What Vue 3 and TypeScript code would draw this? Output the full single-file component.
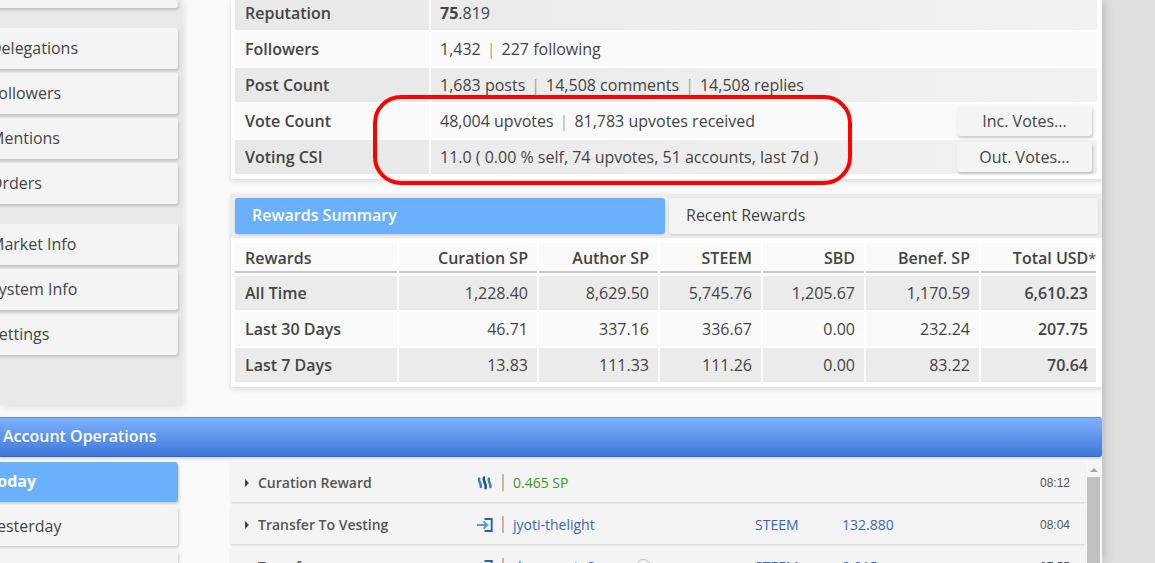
<script setup lang="ts">
const navA: string[] = ['Delegations', 'Followers', 'Mentions', 'Orders']
const navB: string[] = ['Market Info', 'System Info', 'Settings']
const days: string[] = ['Today', 'Yesterday', 'Last 7 Days']
const headers: string[] = ['Curation SP', 'Author SP', 'STEEM', 'SBD', 'Benef. SP']
const rewards = [
  { label: 'All Time', vals: ['1,228.40', '8,629.50', '5,745.76', '1,205.67', '1,170.59'], total: '6,610.23' },
  { label: 'Last 30 Days', vals: ['46.71', '337.16', '336.67', '0.00', '232.24'], total: '207.75' },
  { label: 'Last 7 Days', vals: ['13.83', '111.33', '111.26', '0.00', '83.22'], total: '70.64' },
]
</script>

<template>
  <div class="page">
    <div class="main">
      <div class="top">
        <aside class="side">
          <div class="nav stub"></div>
          <div class="group">
            <div v-for="n in navA" :key="n" class="nav">{{ n }}</div>
          </div>
          <div class="group">
            <div v-for="n in navB" :key="n" class="nav">{{ n }}</div>
          </div>
        </aside>
        <div class="content">
          <section class="card stats">
            <table class="t1">
              <tbody>
                <tr class="odd"><th>Reputation</th><td><b class="semi">75</b>.819</td></tr>
                <tr><th>Followers</th><td>1,432<i class="sep">|</i>227 following</td></tr>
                <tr class="odd"><th>Post Count</th><td>1,683 posts<i class="sep">|</i>14,508 comments<i class="sep">|</i>14,508 replies</td></tr>
                <tr><th>Vote Count</th><td><div class="withbtn"><span>48,004 upvotes<i class="sep green">|</i>81,783 upvotes received</span><button class="btn">Inc. Votes...</button></div></td></tr>
                <tr class="odd"><th>Voting CSI</th><td><div class="withbtn"><span>11.0 ( 0.00 % self, 74 upvotes, 51 accounts, last 7d )</span><button class="btn">Out. Votes...</button></div></td></tr>
              </tbody>
            </table>
          </section>
          <section class="card rewards">
            <div class="tabs">
              <div class="tab active">Rewards Summary</div>
              <div class="tab">Recent Rewards</div>
            </div>
            <table class="t2">
              <thead>
                <tr>
                  <th class="c0">Rewards</th>
                  <th v-for="h in headers" :key="h">{{ h }}</th>
                  <th>Total USD<span class="star">*</span></th>
                </tr>
              </thead>
              <tbody>
                <tr v-for="(r, i) in rewards" :key="r.label" :class="{ odd: i !== 1 }">
                  <th class="c0">{{ r.label }}</th>
                  <td v-for="(v, j) in r.vals" :key="j">{{ v }}</td>
                  <td class="total">{{ r.total }}</td>
                </tr>
              </tbody>
            </table>
          </section>
        </div>
      </div>

      <header class="ops-bar">Account Operations</header>

      <div class="bottom">
        <aside class="side2">
          <div v-for="(d, i) in days" :key="d" class="nav" :class="{ on: i === 0 }">{{ d }}</div>
        </aside>
        <div class="ops">
          <div class="list">
            <div class="op">
              <span class="tri"></span><span class="name">Curation Reward</span>
              <span class="ico">
                <svg width="16" height="14" viewBox="0 0 16 14" fill="none" stroke-linecap="round" stroke-width="2.5">
                  <path d="M2.2 2.5C.9 5 4.6 7.5 3.8 11" stroke="#3f7fc8"/>
                  <path d="M7 1.5C5.6 4.5 9.6 8 8.6 12.2" stroke="#1d4c90"/>
                  <path d="M11.8 2.5C10.5 5 14.2 7.5 13.4 11" stroke="#3f7fc8"/>
                </svg>
              </span>
              <i class="bar"></i><span class="sp">0.465 SP</span>
              <span class="time">08:12</span>
            </div>
            <div class="op">
              <span class="tri"></span><span class="name">Transfer To Vesting</span>
              <span class="ico">
                <svg width="16" height="14" viewBox="0 0 16 14" fill="none">
                  <path d="M7.5 1h7.2v12H7.5" stroke="#2a62ae" stroke-width="1.9"/>
                  <path d="M0 7h10M6.6 3.4 10.2 7 6.6 10.6" stroke="#5a9ae6" stroke-width="2"/>
                </svg>
              </span>
              <i class="bar"></i><span class="acct">jyoti-thelight</span>
              <span class="cur">STEEM</span><span class="amt">132.880</span>
              <span class="time">08:04</span>
            </div>
            <div class="op">
              <span class="tri"></span><span class="name">Transfer</span>
              <span class="ico">
                <svg width="16" height="14" viewBox="0 0 16 14" fill="none">
                  <path d="M7.5 1h7.2v12H7.5" stroke="#2a62ae" stroke-width="1.9"/>
                  <path d="M0 7h10M6.6 3.4 10.2 7 6.6 10.6" stroke="#5a9ae6" stroke-width="2"/>
                </svg>
              </span>
              <i class="bar"></i><span class="acct">deepcrypto8</span>
              <span class="help">?</span>
              <span class="cur">STEEM</span><span class="amt">0.015</span>
              <span class="time">07:55</span>
            </div>
          </div>
          <div class="scroll">
            <span class="up"></span>
            <span class="thumb"></span>
          </div>
        </div>
      </div>
    </div>
    <svg class="mark" width="479" height="90" viewBox="0 0 479 90" fill="none">
      <rect x="2" y="2" width="475" height="86" rx="26" stroke="#f00" stroke-width="4" />
    </svg>
  </div>
</template>

<style>
html, body { margin: 0; overflow: hidden; }
</style>

<style scoped>
.page {
  position: relative;
  width: 1155px;
  height: 563px;
  overflow: hidden;
  background: #e0e0e0;
  font: 16px/22px "Open Sans", sans-serif;
  color: #444;
}
.main {
  width: 1102px;
  height: 563px;
  background: #fafafa;
  box-shadow: 3px 0 10px rgba(0, 0, 0, .16);
  display: flex;
  flex-direction: column;
  overflow: hidden;
}
.top { display: flex; height: 417px; flex: none; }
.side {
  width: 181px;
  height: 405px;
  flex: none;
  background: #e9e9e9;
  box-shadow: 2px 2px 8px rgba(0, 0, 0, .12);
  display: flex;
  flex-direction: column;
  align-items: flex-end;
  gap: 20px;
  overflow: hidden;
}
.group { display: flex; flex-direction: column; gap: 4px; }
.nav {
  width: 190px;
  height: 41px;
  margin-right: 3px;
  box-sizing: border-box;
  padding: 9px 0 0 2px;
  background: #f4f4f4;
  border-radius: 3px;
  box-shadow: 1px 2px 3px rgba(0, 0, 0, .18);
}
.stub { height: 8px; padding: 0; flex: none; }
.content {
  width: 871px;
  margin-left: 50px;
  flex: none;
}
.card {
  background: #fff;
  box-shadow: 0 2px 5px rgba(0, 0, 0, .14);
}
.stats { height: 179px; padding: 0 5px 0 4px; box-sizing: border-box; overflow: hidden; }
table { border-collapse: separate; border-spacing: 0; width: 100%; table-layout: fixed; }
.t1 { margin-top: -4px; width: 862px; }
.t1 tr { height: 36px; }
.t1 th, .t1 td {
  padding: 0 0 0 9px;
  background: #fafafa;
  border-bottom: 2px solid #fff;
  box-sizing: border-box;
  height: 36px;
  text-align: left;
  font-weight: 400;
}
.t1 th { width: 196px; padding-left: 10px; border-right: 2px solid #fff; font-weight: 600; color: #444; }
.t1 .odd th { background: #e9e9e9; }
.t1 .odd td { background: linear-gradient(90deg, #ebebeb, #f1f1f1); }
.semi { font-weight: 700; }
.sep { font-style: normal; color: #b49a80; margin: 0 6px; }
.sep.green { color: #9db87c; }
.withbtn { display: flex; justify-content: space-between; align-items: center; }
.btn {
  width: 135px;
  height: 30px;
  margin-right: 5px;
  border: 0;
  border-radius: 3px;
  background: #f4f4f4;
  color: #444;
  font: inherit;
  padding: 0;
  box-shadow: 1px 2px 3px rgba(0, 0, 0, .2);
}
.rewards {
  margin-top: 15px;
  height: 193px;
  background: #fff;
}
.tabs {
  height: 44px;
  background: #ececec;
  display: flex;
  gap: 4px;
  padding: 4px;
  box-sizing: border-box;
}
.tab {
  flex: 1;
  box-sizing: border-box;
  background: #f4f4f4;
  border-radius: 3px;
  padding-left: 17px;
  line-height: 35px;
  box-shadow: 0 1px 2px rgba(0, 0, 0, .15);
}
.tab.active { flex: 0 0 430px; background: #6bb0ff; color: #fff; font-weight: 600; }
.t2 { margin: 5px 0 0 4px; width: 863px; }
.t2 th, .t2 td {
  padding: 0 9px 0 10px;
  text-align: right;
  font-weight: 400;
  height: 36px;
  box-sizing: border-box;
  border-right: 2px solid #fff;
  border-bottom: 2px solid #fff;
  background: #fafafa;
}
.t2 thead th { font-weight: 600; height: 33px; border-bottom: 3px solid #fff; box-shadow: inset 0 -2px 0 #c9c9c9; }
.t2 thead th:last-child { padding-right: 0; padding-left: 0; }
.t2 td:last-child { padding-right: 8px; }
.star { font-size: 14px; font-weight: 400; }
.t2 th.c0 { text-align: left; font-weight: 600; width: 164px; padding-left: 10px; }
.t2 tbody th { font-weight: 600; }
.t2 .odd th, .t2 .odd td { background: #ebebeb; }
.t2 .total { font-weight: 600; }
.t2 thead th:nth-child(2) { width: 140px; }
.t2 thead th:nth-child(3) { width: 121px; }
.t2 thead th:nth-child(4) { width: 103px; }
.t2 thead th:nth-child(5) { width: 103px; }
.t2 thead th:nth-child(6) { width: 115px; }
.ops-bar {
  height: 40px;
  flex: none;
  box-sizing: border-box;
  padding-left: 3px;
  line-height: 36px;
  color: #fff;
  font-weight: 600;
  border-radius: 0 3px 3px 0;
  background: linear-gradient(#7eb0ff, #3e78d8);
  border-top: 1px solid #5a8fe0;
  border-bottom: 1px solid #3168c8;
  box-shadow: 0 2px 3px rgba(0, 0, 0, .15);
}
.bottom { display: flex; flex: 1; min-height: 0; padding-top: 5px; }
.side2 {
  width: 181px;
  flex: none;
  display: flex;
  flex-direction: column;
  align-items: flex-end;
  gap: 4px;
}
.side2 .nav { height: 40px; flex: none; padding-left: 0; }
.side2 .nav.on { background: #6bb0ff; color: #fff; font-weight: 700; padding-top: 8px; }
.ops { margin-left: 50px; width: 871px; display: flex; gap: 2px; }
.list { width: 854px; flex: none; display: flex; flex-direction: column; gap: 2px; }
.op {
  height: 40px;
  flex: none;
  display: flex;
  align-items: center;
  position: relative;
  box-sizing: border-box;
  padding-top: 1px;
  background: #f4f4f4;
  box-shadow: 0 2px 2px rgba(0, 0, 0, .12);
  font-size: 14px;
}
.tri {
  margin-left: 14px;
  width: 0;
  height: 0;
  border-left: 4px solid #444;
  border-top: 4px solid transparent;
  border-bottom: 4px solid transparent;
}
.name { margin-left: 9px; width: 220px; font-weight: 600; color: #555; }
.ico { width: 16px; height: 14px; display: flex; margin-left: -1px; }
.bar { width: 2px; height: 17px; margin: 0 9px; background: #cdb4a4; }
.sp { color: #3a9a20; }
.acct { color: #3468c0; width: 242px; }
.help {
  position: absolute;
  left: 405px;
  width: 13px;
  height: 13px;
  border: 1px solid #bbb;
  border-radius: 50%;
  font-size: 9px;
  line-height: 13px;
  text-align: center;
  color: #999;
}
.cur { color: #3468c0; width: 87px; }
.amt { color: #3468c0; }
.time { position: absolute; right: 15px; font: 12px/14px "Liberation Sans", Arial, sans-serif; color: #555; }
.scroll { width: 13px; flex: none; position: relative; background: #f5f5f5; display: flex; flex-direction: column; align-items: center; }
.up {
  margin-top: 6px;
  border-left: 4px solid transparent;
  border-right: 4px solid transparent;
  border-bottom: 4px solid #a8a8a8;
}
.thumb { margin-top: 5px; width: 13px; flex: 1; background: #c0c0c0; }
.mark { position: absolute; left: 373px; top: 95px; pointer-events: none; }
</style>
